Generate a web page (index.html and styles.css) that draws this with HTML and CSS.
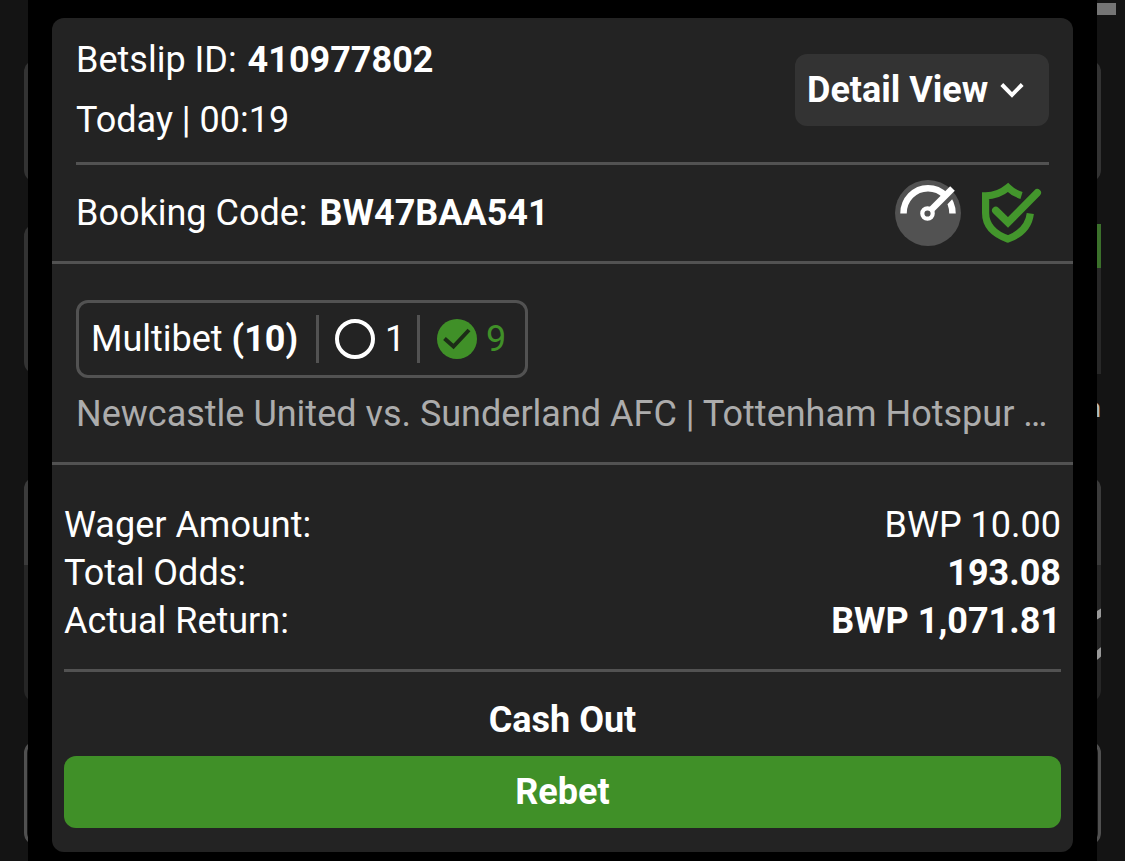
FILE: index.html
```html
<!DOCTYPE html>
<html lang="en">
<head>
  <meta charset="UTF-8">
  <title>Betslip</title>
  <link rel="stylesheet" href="styles.css">
</head>
<body>
  <div class="page">
    <div class="side side-left">
      <div class="block block-one"></div>
      <div class="block block-two"></div>
      <div class="block block-three"></div>
      <div class="block block-four"></div>
    </div>

    <div class="modal">
      <div class="card">
        <div class="header">
          <div class="info">
            <div>Betslip ID: <b class="id">410977802</b></div>
            <div>Today | 00:19</div>
          </div>
          <button class="detail-btn">Detail View
            <svg width="25" height="16" viewBox="0 0 25 16"><path d="M1.800 2.500 L12 12.800 L22.200 2.500" fill="none" stroke="#fff" stroke-width="4"/></svg>
          </button>
        </div>

        <div class="booking">
          <div>Booking Code: <b class="code">BW47BAA541</b></div>
          <div class="icons">
            <svg width="66" height="66" viewBox="0 0 66 66">
              <circle cx="33" cy="33" r="33" fill="#525252"/>
              <path d="M8.500 33.500 A24 24.800 0 0 1 57.500 33.500" fill="none" stroke="#fff" stroke-width="6.500"/>
              <path d="M38 33 L57 13" stroke="#525252" stroke-width="9"/>
              <path d="M35.500 30.500 L57.500 8.500" stroke="#fff" stroke-width="6.500"/>
              <circle cx="32.500" cy="33.500" r="5.200" fill="#525252" stroke="#fff" stroke-width="4.200"/>
            </svg>
            <svg width="62" height="66" viewBox="0 0 62 66">
              <path d="M41.500 15.500 C36 13.800 31.500 11 28 7.500 C22 12.500 15 15.800 5.600 15.800 V33 C5.600 45 14 54 28 59 C41 54 49 45 50.300 33.500" fill="none" stroke="#43962c" stroke-width="7.200"/>
              <path d="M15.800 30.500 L28 42.500 L57.200 12.800" fill="none" stroke="#43962c" stroke-width="7.600" stroke-linecap="round"/>
            </svg>
          </div>
        </div>

        <div class="bets">
          <div class="multibet">
            <span class="type">Multibet <b>(10)</b></span>
            <span class="count open">
              <svg width="40" height="40" viewBox="0 0 40 40"><circle cx="20" cy="20" r="18" fill="none" stroke="#fff" stroke-width="4"/></svg>
              1
            </span>
            <span class="count won">
              <svg width="40" height="40" viewBox="0 0 40 40">
                <circle cx="20" cy="20" r="20" fill="#409028"/>
                <path d="M7.500 19.500 L16.500 27.500 L32 11" fill="none" stroke="#1c2c17" stroke-width="4"/>
              </svg>
              9
            </span>
          </div>
          <div class="teams">Newcastle United vs. Sunderland AFC | Tottenham Hotspur vs. Brighton</div>
        </div>

        <div class="totals">
          <div class="row"><span>Wager Amount:</span><span>BWP 10.00</span></div>
          <div class="row"><span>Total Odds:</span><b>193.08</b></div>
          <div class="row"><span>Actual Return:</span><b>BWP 1,071.81</b></div>
        </div>

        <div class="actions">
          <button class="cashout">Cash Out</button>
          <button class="rebet">Rebet</button>
        </div>
      </div>
    </div>

    <div class="side side-right">
      <div class="thumb"></div>
      <div class="block block-one"></div>
      <div class="block block-two"></div>
      <div class="letter"><span>n</span></div>
      <div class="block block-three">
        <svg width="4" height="54" viewBox="0 0 4 54"><path d="M-2 10.500 L6 5.500 M-2 51 L6 44" stroke="#999" stroke-width="7"/></svg>
      </div>
      <div class="block block-four"></div>
    </div>
  </div>
</body>
</html>
```

FILE: styles.css
```css
* {
  box-sizing: border-box;
}

body {
  margin: 0;
  background: #141414;
  color: #fff;
  font-family: Roboto, sans-serif;
  font-size: 36px;
  line-height: 48px;
}

.page {
  display: flex;
  height: 861px;
  overflow: hidden;
}

b {
  font-weight: 700;
}

svg {
  display: block;
  flex-shrink: 0;
}

button {
  border: none;
  padding: 0;
  color: #fff;
  font: inherit;
  font-weight: 700;
  cursor: pointer;
}

/* page behind the modal */
.side {
  width: 28px;
  height: 861px;
  flex-shrink: 0;
  overflow: hidden;
  background: #141414;
}

.block {
  width: 60px;
  border-radius: 12px;
  background: #333;
}

.side-left .block {
  margin-left: 24px;
}

.side-right .block {
  margin-left: -56px;
}

.block-one {
  height: 122px;
  margin-top: 60px;
}

.block-two {
  height: 150px;
  margin-top: 42px;
}

.block-three {
  height: 225px;
  margin-top: 103px;
  background: linear-gradient(#3b3b3b 88px, #262626 88px);
}

.block-four {
  height: 104px;
  margin-top: 39px;
  border: 3px solid #505050;
  background: #171717;
}

.thumb {
  width: 19px;
  height: 12px;
  margin-top: 3px;
  background: #757575;
}

.side-right .block-one {
  margin-top: 45px;
}

.side-right .block-two {
  border-radius: 0;
  background: linear-gradient(#3b702b 44px, #282828 44px);
}

.side-right .letter {
  display: flex;
  justify-content: flex-end;
  width: 4px;
  height: 48px;
  margin-top: 12px;
  color: #bbb;
  font-size: 26px;
  line-height: 44px;
}

.side-right .block-three {
  margin-top: 43px;
  padding: 129px 0 0 56px;
}

/* modal */
.modal {
  flex: 1;
  min-width: 0;
  padding: 18px 24px 9px;
  background: #000;
}

.card {
  height: 834px;
  border-radius: 12px;
  background: #232323;
}

.header {
  display: flex;
  justify-content: space-between;
  align-items: center;
  height: 147px;
  margin: 0 24px;
  border-bottom: 3px solid #525252;
}

.info {
  line-height: 60px;
  padding-bottom: 1px;
}

.id {
  margin-left: 2px;
}

.code {
  margin-left: 3px;
}

.detail-btn {
  display: flex;
  align-items: center;
  gap: 12px;
  width: 254px;
  height: 72px;
  padding-left: 12px;
  border-radius: 12px;
  background: #333;
}

.booking {
  display: flex;
  justify-content: space-between;
  align-items: center;
  height: 99px;
  padding: 0 24px;
  border-bottom: 3px solid #525252;
}

.icons {
  display: flex;
  gap: 19px;
  margin-right: 7px;
}

.bets {
  height: 201px;
  padding: 36px 24px 0;
  border-bottom: 3px solid #525252;
}

.multibet {
  display: flex;
  align-items: center;
  width: 452px;
  height: 78px;
  border: 3px solid #525252;
  border-radius: 12px;
}

.type {
  width: 237px;
  padding-left: 12px;
}

.count {
  display: flex;
  align-items: center;
  gap: 10px;
  height: 48px;
  padding-left: 16px;
  border-left: 3px solid #525252;
}

.open {
  width: 101px;
}

.won {
  gap: 9px;
  padding-left: 17px;
  color: #409028;
}

.teams {
  margin-top: 12px;
  color: #acacac;
  white-space: nowrap;
  overflow: hidden;
  text-overflow: ellipsis;
}

.totals {
  height: 207px;
  margin: 0 12px;
  padding-top: 36px;
  border-bottom: 3px solid #525252;
}

.row {
  display: flex;
  justify-content: space-between;
}

.actions {
  display: flex;
  flex-direction: column;
  padding: 12px 12px 0;
}

.actions button {
  height: 72px;
  border-radius: 12px;
}

.cashout {
  background: none;
}

.rebet {
  background: #409028;
}
```
